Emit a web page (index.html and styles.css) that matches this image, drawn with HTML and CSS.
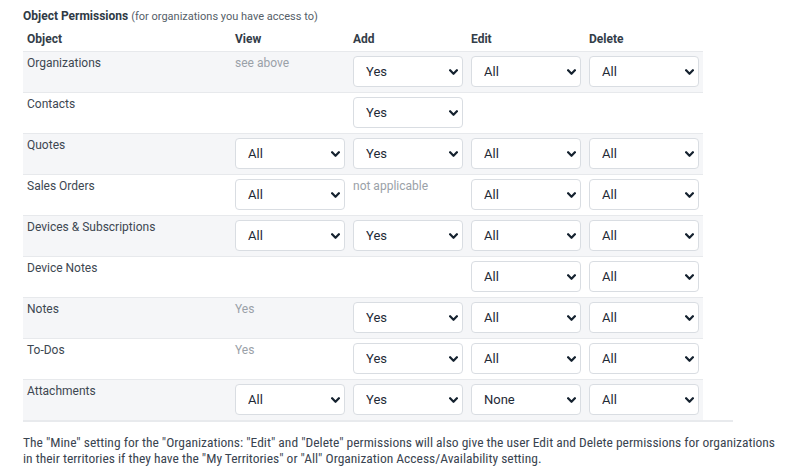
FILE: index.html
```html
<!DOCTYPE html>
<html>
<head>
<meta charset="utf-8">
<link rel="stylesheet" href="styles.css">
</head>
<body>
<div class="wrap">
  <div class="title"><b>Object Permissions</b> <span class="sub">(for organizations you have access to)</span></div>
  <div class="tablebox">
  <table class="perm">
    <thead>
      <tr><th class="c-obj">Object</th><th>View</th><th>Add</th><th>Edit</th><th>Delete</th></tr>
    </thead>
    <tbody>
      <tr class="alt">
        <td class="lbl">Organizations</td>
        <td class="note">see above</td>
        <td><span class="sel"><select><option>Yes</option></select><svg viewBox="0 0 8 5"><path d="M1 1l3 3 3-3"/></svg></span></td>
        <td><span class="sel"><select><option>All</option></select><svg viewBox="0 0 8 5"><path d="M1 1l3 3 3-3"/></svg></span></td>
        <td><span class="sel"><select><option>All</option></select><svg viewBox="0 0 8 5"><path d="M1 1l3 3 3-3"/></svg></span></td>
      </tr>
      <tr>
        <td class="lbl">Contacts</td>
        <td></td>
        <td><span class="sel"><select><option>Yes</option></select><svg viewBox="0 0 8 5"><path d="M1 1l3 3 3-3"/></svg></span></td>
        <td></td>
        <td></td>
      </tr>
      <tr class="alt">
        <td class="lbl">Quotes</td>
        <td><span class="sel"><select><option>All</option></select><svg viewBox="0 0 8 5"><path d="M1 1l3 3 3-3"/></svg></span></td>
        <td><span class="sel"><select><option>Yes</option></select><svg viewBox="0 0 8 5"><path d="M1 1l3 3 3-3"/></svg></span></td>
        <td><span class="sel"><select><option>All</option></select><svg viewBox="0 0 8 5"><path d="M1 1l3 3 3-3"/></svg></span></td>
        <td><span class="sel"><select><option>All</option></select><svg viewBox="0 0 8 5"><path d="M1 1l3 3 3-3"/></svg></span></td>
      </tr>
      <tr>
        <td class="lbl">Sales Orders</td>
        <td><span class="sel"><select><option>All</option></select><svg viewBox="0 0 8 5"><path d="M1 1l3 3 3-3"/></svg></span></td>
        <td class="note">not applicable</td>
        <td><span class="sel"><select><option>All</option></select><svg viewBox="0 0 8 5"><path d="M1 1l3 3 3-3"/></svg></span></td>
        <td><span class="sel"><select><option>All</option></select><svg viewBox="0 0 8 5"><path d="M1 1l3 3 3-3"/></svg></span></td>
      </tr>
      <tr class="alt">
        <td class="lbl">Devices &amp; Subscriptions</td>
        <td><span class="sel"><select><option>All</option></select><svg viewBox="0 0 8 5"><path d="M1 1l3 3 3-3"/></svg></span></td>
        <td><span class="sel"><select><option>Yes</option></select><svg viewBox="0 0 8 5"><path d="M1 1l3 3 3-3"/></svg></span></td>
        <td><span class="sel"><select><option>All</option></select><svg viewBox="0 0 8 5"><path d="M1 1l3 3 3-3"/></svg></span></td>
        <td><span class="sel"><select><option>All</option></select><svg viewBox="0 0 8 5"><path d="M1 1l3 3 3-3"/></svg></span></td>
      </tr>
      <tr>
        <td class="lbl">Device Notes</td>
        <td></td>
        <td></td>
        <td><span class="sel"><select><option>All</option></select><svg viewBox="0 0 8 5"><path d="M1 1l3 3 3-3"/></svg></span></td>
        <td><span class="sel"><select><option>All</option></select><svg viewBox="0 0 8 5"><path d="M1 1l3 3 3-3"/></svg></span></td>
      </tr>
      <tr class="alt">
        <td class="lbl">Notes</td>
        <td class="note">Yes</td>
        <td><span class="sel"><select><option>Yes</option></select><svg viewBox="0 0 8 5"><path d="M1 1l3 3 3-3"/></svg></span></td>
        <td><span class="sel"><select><option>All</option></select><svg viewBox="0 0 8 5"><path d="M1 1l3 3 3-3"/></svg></span></td>
        <td><span class="sel"><select><option>All</option></select><svg viewBox="0 0 8 5"><path d="M1 1l3 3 3-3"/></svg></span></td>
      </tr>
      <tr>
        <td class="lbl">To-Dos</td>
        <td class="note">Yes</td>
        <td><span class="sel"><select><option>Yes</option></select><svg viewBox="0 0 8 5"><path d="M1 1l3 3 3-3"/></svg></span></td>
        <td><span class="sel"><select><option>All</option></select><svg viewBox="0 0 8 5"><path d="M1 1l3 3 3-3"/></svg></span></td>
        <td><span class="sel"><select><option>All</option></select><svg viewBox="0 0 8 5"><path d="M1 1l3 3 3-3"/></svg></span></td>
      </tr>
      <tr class="alt">
        <td class="lbl">Attachments</td>
        <td><span class="sel"><select><option>All</option></select><svg viewBox="0 0 8 5"><path d="M1 1l3 3 3-3"/></svg></span></td>
        <td><span class="sel"><select><option>Yes</option></select><svg viewBox="0 0 8 5"><path d="M1 1l3 3 3-3"/></svg></span></td>
        <td><span class="sel"><select><option>None</option></select><svg viewBox="0 0 8 5"><path d="M1 1l3 3 3-3"/></svg></span></td>
        <td><span class="sel"><select><option>All</option></select><svg viewBox="0 0 8 5"><path d="M1 1l3 3 3-3"/></svg></span></td>
      </tr>
    </tbody>
  </table>
  </div>
  <p class="foot">The "Mine" setting for the "Organizations: "Edit" and "Delete" permissions will also give the user Edit and Delete permissions for organizations in their territories if they have the "My Territories" or "All" Organization Access/Availability setting.</p>
</div>
</body>
</html>
```
FILE: styles.css
```css
html, body {
  margin: 0;
  padding: 0;
  background: #ffffff;
}
.wrap {
  padding: 8px 0 0 23px;
  font-family: Roboto, "Liberation Sans", sans-serif;
  color: #3a4450;
}
.title {
  font-size: 12px;
  line-height: 16px;
  height: 16px;
  color: #2f3a45;
}
.title b {
  font-weight: 700;
}
.title .sub {
  font-size: 11px;
  color: #555e68;
}
.tablebox {
  width: 710px;
  border-bottom: 2px solid #e8eaed;
}
.perm {
  border-collapse: collapse;
  width: 680px;
  table-layout: fixed;
}
.perm th {
  text-align: left;
  font-size: 12px;
  font-weight: 700;
  line-height: 14px;
  padding: 8px 4px 5px;
  width: 110px;
  color: #333d48;
}
.perm th.c-obj {
  width: 200px;
}
.perm td {
  border-top: 1px solid #e7e9ec;
  padding: 4px 4px 5px;
  vertical-align: top;
  font-size: 12px;
  line-height: 14px;
}
.perm tr.alt td {
  background: #f5f6f8;
}
.perm td.lbl {
  padding-top: 4px;
  color: #3d4751;
}
.perm td.note {
  padding-top: 4px;
  color: #9aa1a8;
}
.sel {
  position: relative;
  display: block;
  width: 110px;
  height: 31px;
}
.sel select {
  appearance: none;
  -webkit-appearance: none;
  display: block;
  box-sizing: border-box;
  width: 110px;
  height: 31px;
  margin: 0;
  padding: 0 0 0 12px;
  border: 1px solid #d9dde2;
  border-radius: 4px;
  background: #ffffff;
  font-family: Roboto, "Liberation Sans", sans-serif;
  font-size: 13px;
  color: #1f2a36;
  outline: none;
}
.sel svg {
  position: absolute;
  right: 5px;
  top: 13px;
  width: 9px;
  height: 6px;
  fill: none;
  stroke: #15222f;
  stroke-width: 2;
  stroke-linecap: round;
  stroke-linejoin: round;
  pointer-events: none;
}
.foot {
  margin: 12px 0 0;
  font-family: "Roboto Condensed", "Liberation Sans Narrow", "DejaVu Sans Condensed", sans-serif;
  font-size: 13.5px;
  line-height: 16px;
  color: #3a4450;
  width: 752px;
}
```
